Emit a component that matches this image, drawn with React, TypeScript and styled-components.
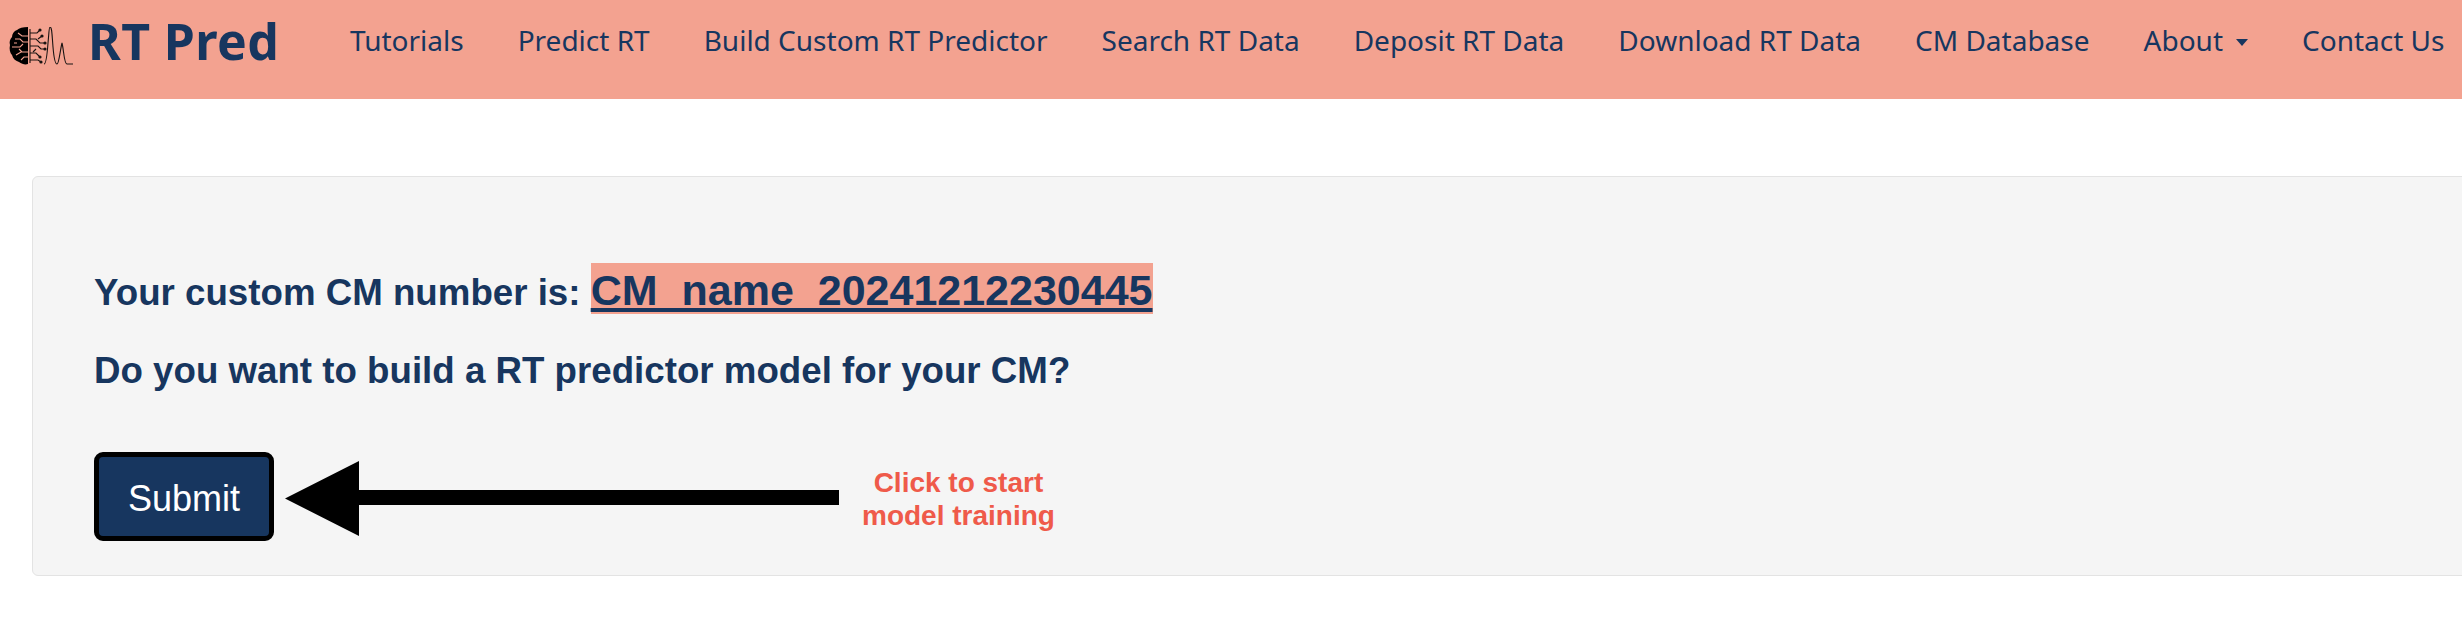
import React from 'react';
import styled, { createGlobalStyle } from 'styled-components';

const navy = '#17365f';
const salmon = '#f3a290';

const Global = createGlobalStyle`
  html, body {
    margin: 0;
    padding: 0;
    background: #fff;
    overflow: hidden;
  }
`;

const Page = styled.div`
  width: 2462px;
  height: 622px;
  overflow: hidden;
`;

const Navbar = styled.nav`
  height: 99px;
  background: ${salmon};
  display: flex;
  align-items: flex-start;
  white-space: nowrap;
  padding-left: 9px;
`;

const Brand = styled.a`
  display: flex;
  align-items: flex-start;
  gap: 15px;
  color: ${navy};
  font-family: 'Noto Sans', sans-serif;
  font-weight: 700;
  font-size: 50px;
  letter-spacing: 0.4px;
  line-height: 40px;
  padding-top: 21px;
  width: 341px;
  flex: none;
  svg {
    margin-top: 6px;
    flex: none;
  }
`;

const NavItem = styled.a`
  color: ${navy};
  font-family: 'Noto Sans', sans-serif;
  font-size: 28px;
  line-height: 36px;
  padding-top: 22px;
  margin-right: 54px;
  flex: none;
  display: flex;
  align-items: center;
`;

const Caret = styled.span`
  display: inline-block;
  margin-left: 13px;
  margin-top: 17px;
  align-self: flex-start;
  width: 0;
  height: 0;
  border-left: 6.5px solid transparent;
  border-right: 6.5px solid transparent;
  border-top: 7px solid ${navy};
`;

const Well = styled.section`
  margin: 77px 0 0 32px;
  width: 2500px;
  height: 400px;
  box-sizing: border-box;
  background: #f5f5f5;
  border: 1px solid #e3e3e3;
  border-radius: 6px;
  padding: 88px 0 0 61px;
  font-family: 'Liberation Sans', Arial, sans-serif;
`;

const Line = styled.div`
  color: ${navy};
  font-weight: 700;
  font-size: 36.7px;
  line-height: 50px;
  margin-bottom: 28px;
  white-space: nowrap;
`;

const CmLink = styled.a`
  background: ${salmon};
  color: ${navy};
  font-size: 43px;
  text-decoration: underline;
  padding-top: 3px;
`;

const ActionRow = styled.div`
  display: flex;
  align-items: flex-start;
  margin-top: 56px;
`;

const SubmitButton = styled.button`
  width: 180px;
  height: 89px;
  box-sizing: border-box;
  background: ${navy};
  color: #fff;
  border: 5px solid #000;
  border-radius: 9px;
  font-family: 'Liberation Sans', Arial, sans-serif;
  font-size: 36px;
  padding-top: 6px;
  flex: none;
`;

const Arrow = styled.svg`
  margin: 9px 0 0 11px;
  flex: none;
`;

const Hint = styled.div`
  color: #ef5a4a;
  font-weight: 700;
  font-size: 28px;
  line-height: 33px;
  text-align: center;
  margin: 14px 0 0 22px;
`;

const Logo = () => (
  <svg width="64" height="38" viewBox="0 0 64 38">
    <path d="M19 0C14 0 10 1 8 3C5 4 3 7 3 10C1 12 0 15 1 18C0 22 1 26 3 28C4 32 7 34 10 35C13 37 16 38 19 37Z" fill="#000" />
    <g stroke={salmon} strokeWidth="1.1" fill="none">
      <path d="M6 12h5l3 3h5M3 20h8l3-3M7 28l5-3h7M9 6l4 3h6M12 33l3-3h4M5 16h3M10 22l3 3" />
    </g>
    <g stroke="#1a1412" strokeWidth="1.1" fill="none">
      <path d="M21 2v34M21 6h7l3-3M21 12h6l4 4h5M21 19h8l3 3h4M21 26h6l4 4M21 33h8l3 2" />
      <path d="M29 12l4-3M27 22l-3 3" />
      <path d="M35 37C37 37 38 30 39 16C40 6 40 0 41 0C43 0 43 8 44 20C45 32 46 37 48 37C50 37 51 24 53 16C55 24 55 37 58 37H64" />
    </g>
    <g fill="#1a1412">
      <circle cx="31" cy="3" r="1.6" />
      <circle cx="36" cy="16" r="1.6" />
      <circle cx="36" cy="22" r="1.6" />
      <circle cx="31" cy="30" r="1.6" />
      <circle cx="33" cy="9" r="1.6" />
      <circle cx="32" cy="35" r="1.6" />
    </g>
  </svg>
);

const links = [
  'Tutorials',
  'Predict RT',
  'Build Custom RT Predictor',
  'Search RT Data',
  'Deposit RT Data',
  'Download RT Data',
  'CM Database',
];

export default function App() {
  return (
    <Page>
      <Global />
      <Navbar>
        <Brand>
          <Logo />
          RT Pred
        </Brand>
        {links.map(link => (
          <NavItem key={link}>{link}</NavItem>
        ))}
        <NavItem>
          About
          <Caret />
        </NavItem>
        <NavItem>Contact Us</NavItem>
      </Navbar>
      <Well>
        <Line>
          Your custom CM number is: <CmLink>CM_name_20241212230445</CmLink>
        </Line>
        <Line>Do you want to build a RT predictor model for your CM?</Line>
        <ActionRow>
          <SubmitButton>Submit</SubmitButton>
          <Arrow width="555" height="75" viewBox="0 0 555 75">
            <path d="M0 37.5L74 0V29H554V44H74V75Z" fill="#000" />
          </Arrow>
          <Hint>
            Click to start
            <br />
            model training
          </Hint>
        </ActionRow>
      </Well>
    </Page>
  );
}
